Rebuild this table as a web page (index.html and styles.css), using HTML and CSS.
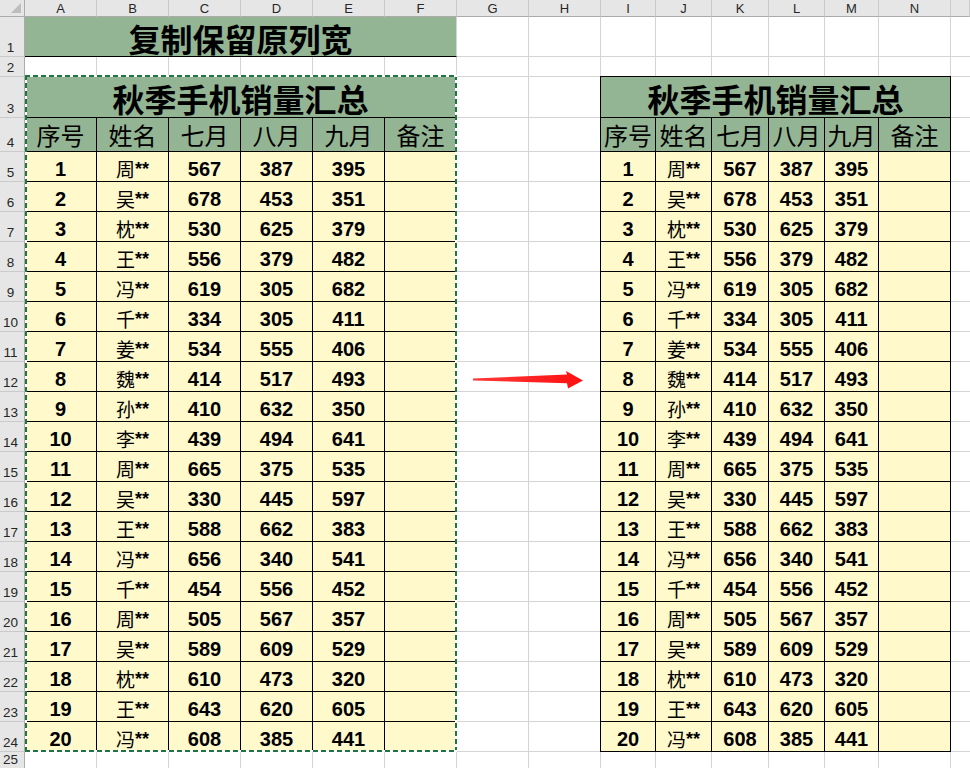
FILE: index.html
```html
<!DOCTYPE html>
<html lang="zh">
<head>
<meta charset="utf-8">
<title>复制保留原列宽</title>
<link rel="stylesheet" href="styles.css">
</head>
<body>
<div class="sheet">
  <div class="colhdr">
    <div class="corner"></div>
    <div>A</div><div>B</div><div>C</div><div>D</div><div>E</div><div>F</div><div>G</div><div>H</div>
    <div>I</div><div>J</div><div>K</div><div>L</div><div>M</div><div>N</div><div></div>
  </div>
  <div class="body">
    <div class="rowhdr">
      <div>1</div><div>2</div><div>3</div><div>4</div><div>5</div><div>6</div><div>7</div><div>8</div><div>9</div><div>10</div>
      <div>11</div><div>12</div><div>13</div><div>14</div><div>15</div><div>16</div><div>17</div><div>18</div><div>19</div><div>20</div>
      <div>21</div><div>22</div><div>23</div><div>24</div><div>25</div>
    </div>
    <div class="cells">
      <div class="title1">复制保留原列宽</div>

      <div class="tbl tbl-left">
        <div class="ttl">秋季手机销量汇总</div>
        <div class="hd">序号</div><div class="hd">姓名</div><div class="hd">七月</div><div class="hd">八月</div><div class="hd">九月</div><div class="hd">备注</div>
        <div>1</div><div class="nm"><span class="sn">周</span><span class="st">**</span></div><div>567</div><div>387</div><div>395</div><div></div>
        <div>2</div><div class="nm"><span class="sn">吴</span><span class="st">**</span></div><div>678</div><div>453</div><div>351</div><div></div>
        <div>3</div><div class="nm"><span class="sn">枕</span><span class="st">**</span></div><div>530</div><div>625</div><div>379</div><div></div>
        <div>4</div><div class="nm"><span class="sn">王</span><span class="st">**</span></div><div>556</div><div>379</div><div>482</div><div></div>
        <div>5</div><div class="nm"><span class="sn">冯</span><span class="st">**</span></div><div>619</div><div>305</div><div>682</div><div></div>
        <div>6</div><div class="nm"><span class="sn">千</span><span class="st">**</span></div><div>334</div><div>305</div><div>411</div><div></div>
        <div>7</div><div class="nm"><span class="sn">姜</span><span class="st">**</span></div><div>534</div><div>555</div><div>406</div><div></div>
        <div>8</div><div class="nm"><span class="sn">魏</span><span class="st">**</span></div><div>414</div><div>517</div><div>493</div><div></div>
        <div>9</div><div class="nm"><span class="sn">孙</span><span class="st">**</span></div><div>410</div><div>632</div><div>350</div><div></div>
        <div>10</div><div class="nm"><span class="sn">李</span><span class="st">**</span></div><div>439</div><div>494</div><div>641</div><div></div>
        <div>11</div><div class="nm"><span class="sn">周</span><span class="st">**</span></div><div>665</div><div>375</div><div>535</div><div></div>
        <div>12</div><div class="nm"><span class="sn">吴</span><span class="st">**</span></div><div>330</div><div>445</div><div>597</div><div></div>
        <div>13</div><div class="nm"><span class="sn">王</span><span class="st">**</span></div><div>588</div><div>662</div><div>383</div><div></div>
        <div>14</div><div class="nm"><span class="sn">冯</span><span class="st">**</span></div><div>656</div><div>340</div><div>541</div><div></div>
        <div>15</div><div class="nm"><span class="sn">千</span><span class="st">**</span></div><div>454</div><div>556</div><div>452</div><div></div>
        <div>16</div><div class="nm"><span class="sn">周</span><span class="st">**</span></div><div>505</div><div>567</div><div>357</div><div></div>
        <div>17</div><div class="nm"><span class="sn">吴</span><span class="st">**</span></div><div>589</div><div>609</div><div>529</div><div></div>
        <div>18</div><div class="nm"><span class="sn">枕</span><span class="st">**</span></div><div>610</div><div>473</div><div>320</div><div></div>
        <div>19</div><div class="nm"><span class="sn">王</span><span class="st">**</span></div><div>643</div><div>620</div><div>605</div><div></div>
        <div>20</div><div class="nm"><span class="sn">冯</span><span class="st">**</span></div><div>608</div><div>385</div><div>441</div><div></div>
      </div>

      <div class="tbl tbl-right">
        <div class="ttl">秋季手机销量汇总</div>
        <div class="hd">序号</div><div class="hd">姓名</div><div class="hd">七月</div><div class="hd">八月</div><div class="hd">九月</div><div class="hd">备注</div>
        <div>1</div><div class="nm"><span class="sn">周</span><span class="st">**</span></div><div>567</div><div>387</div><div>395</div><div></div>
        <div>2</div><div class="nm"><span class="sn">吴</span><span class="st">**</span></div><div>678</div><div>453</div><div>351</div><div></div>
        <div>3</div><div class="nm"><span class="sn">枕</span><span class="st">**</span></div><div>530</div><div>625</div><div>379</div><div></div>
        <div>4</div><div class="nm"><span class="sn">王</span><span class="st">**</span></div><div>556</div><div>379</div><div>482</div><div></div>
        <div>5</div><div class="nm"><span class="sn">冯</span><span class="st">**</span></div><div>619</div><div>305</div><div>682</div><div></div>
        <div>6</div><div class="nm"><span class="sn">千</span><span class="st">**</span></div><div>334</div><div>305</div><div>411</div><div></div>
        <div>7</div><div class="nm"><span class="sn">姜</span><span class="st">**</span></div><div>534</div><div>555</div><div>406</div><div></div>
        <div>8</div><div class="nm"><span class="sn">魏</span><span class="st">**</span></div><div>414</div><div>517</div><div>493</div><div></div>
        <div>9</div><div class="nm"><span class="sn">孙</span><span class="st">**</span></div><div>410</div><div>632</div><div>350</div><div></div>
        <div>10</div><div class="nm"><span class="sn">李</span><span class="st">**</span></div><div>439</div><div>494</div><div>641</div><div></div>
        <div>11</div><div class="nm"><span class="sn">周</span><span class="st">**</span></div><div>665</div><div>375</div><div>535</div><div></div>
        <div>12</div><div class="nm"><span class="sn">吴</span><span class="st">**</span></div><div>330</div><div>445</div><div>597</div><div></div>
        <div>13</div><div class="nm"><span class="sn">王</span><span class="st">**</span></div><div>588</div><div>662</div><div>383</div><div></div>
        <div>14</div><div class="nm"><span class="sn">冯</span><span class="st">**</span></div><div>656</div><div>340</div><div>541</div><div></div>
        <div>15</div><div class="nm"><span class="sn">千</span><span class="st">**</span></div><div>454</div><div>556</div><div>452</div><div></div>
        <div>16</div><div class="nm"><span class="sn">周</span><span class="st">**</span></div><div>505</div><div>567</div><div>357</div><div></div>
        <div>17</div><div class="nm"><span class="sn">吴</span><span class="st">**</span></div><div>589</div><div>609</div><div>529</div><div></div>
        <div>18</div><div class="nm"><span class="sn">枕</span><span class="st">**</span></div><div>610</div><div>473</div><div>320</div><div></div>
        <div>19</div><div class="nm"><span class="sn">王</span><span class="st">**</span></div><div>643</div><div>620</div><div>605</div><div></div>
        <div>20</div><div class="nm"><span class="sn">冯</span><span class="st">**</span></div><div>608</div><div>385</div><div>441</div><div></div>
      </div>
    </div>
  </div>

  <div class="marquee"></div>

  <svg class="arrow" width="116" height="24" viewBox="0 0 116 24">
    <defs>
      <linearGradient id="ag" x1="0" y1="0" x2="1" y2="0">
        <stop offset="0" stop-color="#ff3a3a"/>
        <stop offset="1" stop-color="#ff1010"/>
      </linearGradient>
    </defs>
    <polygon points="3,10.6 97,6.6 96,3 113,12.5 98,20.5 97,15.2 3,12.4" fill="url(#ag)"/>
  </svg>
</div>
</body>
</html>
```

FILE: styles.css
```css
* {
  box-sizing: border-box;
  margin: 0;
  padding: 0;
}

body {
  margin: 0;
  width: 970px;
  height: 768px;
  overflow: hidden;
  background: #ffffff;
  font-family: "Liberation Sans", "Noto Sans CJK SC", sans-serif;
  color: #000;
}

.sheet {
  position: relative;
  width: 970px;
  height: 768px;
  display: flex;
  flex-direction: column;
}

/* column header bar */
.colhdr {
  display: grid;
  grid-template-columns: 25px repeat(8, 72px) 55px 56px 57px 56px 54px 72px 1fr;
  height: 17px;
  flex: none;
}

.colhdr > div {
  background: #e6e6e6;
  border-right: 1px solid #cacaca;
  border-bottom: 1px solid #ababab;
  font-size: 13px;
  line-height: 15px;
  padding-top: 1px;
  text-align: center;
  color: #262626;
}

.colhdr > .corner {
  position: relative;
  border-right-color: #ababab;
}

.corner::after {
  content: "";
  position: absolute;
  left: 11px;
  top: 3px;
  width: 10px;
  height: 10px;
  background: #bdbdbd;
  clip-path: polygon(100% 0, 100% 100%, 0 100%);
}

/* body */
.body {
  display: flex;
  flex: 1;
}

.rowhdr {
  width: 25px;
  flex: none;
  display: grid;
  grid-template-rows: 40px 20px 41px 34px repeat(20, 30px) 1fr;
}

.rowhdr > div {
  background: #e6e6e6;
  border-right: 1px solid #ababab;
  border-bottom: 1px solid #cacaca;
  font-size: 13.5px;
  line-height: 15px;
  color: #262626;
  display: flex;
  align-items: flex-end;
  justify-content: center;
  padding-right: 3px;
  padding-bottom: 1px;
}

.cells {
  flex: 1;
  display: grid;
  grid-template-columns: repeat(8, 72px) 55px 56px 57px 56px 54px 72px 1fr;
  grid-template-rows: 40px 20px 41px 34px repeat(20, 30px) 1fr;
  background:
    repeating-linear-gradient(to right, transparent 0 71px, #d4d4d4 71px 72px) 0 0 / 576px 100% no-repeat,
    linear-gradient(#d4d4d4, #d4d4d4) 630px 0 / 1px 100% no-repeat,
    linear-gradient(#d4d4d4, #d4d4d4) 686px 0 / 1px 100% no-repeat,
    linear-gradient(#d4d4d4, #d4d4d4) 743px 0 / 1px 100% no-repeat,
    linear-gradient(#d4d4d4, #d4d4d4) 799px 0 / 1px 100% no-repeat,
    linear-gradient(#d4d4d4, #d4d4d4) 853px 0 / 1px 100% no-repeat,
    linear-gradient(#d4d4d4, #d4d4d4) 925px 0 / 1px 100% no-repeat,
    linear-gradient(#d4d4d4, #d4d4d4) 0 39px / 100% 1px no-repeat,
    linear-gradient(#d4d4d4, #d4d4d4) 0 59px / 100% 1px no-repeat,
    linear-gradient(#d4d4d4, #d4d4d4) 0 100px / 100% 1px no-repeat,
    linear-gradient(#d4d4d4, #d4d4d4) 0 134px / 100% 1px no-repeat,
    repeating-linear-gradient(to bottom, transparent 0 29px, #d4d4d4 29px 30px) 0 135px / 100% 600px no-repeat,
    #ffffff;
}

.title1 {
  grid-column: 1 / 7;
  grid-row: 1;
  background: #94b594;
  border-bottom: 1px solid #000;
  border-right: 1px solid #cfd6cf;
  display: flex;
  align-items: center;
  justify-content: center;
  font-family: "Noto Sans CJK SC", sans-serif;
  font-weight: 700;
  font-size: 32px;
  line-height: 1;
  padding-top: 3px;
}

/* tables */
.tbl {
  display: grid;
  grid-template-rows: 41px 34px repeat(20, 30px);
}

.tbl-left {
  grid-column: 1 / 7;
  grid-row: 3 / 25;
  grid-template-columns: repeat(6, 72px);
}

.tbl-right {
  grid-column: 9 / 15;
  grid-row: 3 / 25;
  margin-left: -1px;
  margin-top: -1px;
  border-left: 1px solid #000;
  border-top: 1px solid #000;
  grid-template-columns: 55px 56px 57px 56px 54px 72px;
}

.tbl > div {
  background: #fff9cc;
  border-right: 1px solid #000;
  border-bottom: 1px solid #000;
  display: flex;
  align-items: center;
  justify-content: center;
  font-weight: 700;
  font-size: 20px;
  line-height: 1;
  padding-top: 4px;
  white-space: nowrap;
}

.tbl > .ttl {
  grid-column: 1 / -1;
  background: #94b594;
  font-family: "Noto Sans CJK SC", sans-serif;
  font-weight: 700;
  font-size: 32px;
  padding-top: 2px;
}

.tbl > .hd {
  background: #94b594;
  font-family: "Noto Sans CJK SC", sans-serif;
  font-weight: 400;
  font-size: 24px;
  padding-top: 0;
}

.sn {
  font-family: "Noto Sans CJK SC", sans-serif;
  font-weight: 400;
  font-size: 19px;
}

.st {
  font-size: 18px;
  line-height: 0;
  vertical-align: -4px;
}

/* copy marquee around the source range */
.marquee {
  position: absolute;
  left: 25px;
  top: 75px;
  width: 432px;
  height: 677px;
  pointer-events: none;
  background:
    repeating-linear-gradient(to right, #217346 0 5px, #ffffff 5px 8px) left top / 100% 2px no-repeat,
    repeating-linear-gradient(to right, #217346 0 5px, #ffffff 5px 8px) left bottom / 100% 2px no-repeat,
    repeating-linear-gradient(to bottom, #217346 0 5px, #ffffff 5px 8px) left top / 2px 100% no-repeat,
    repeating-linear-gradient(to bottom, #217346 0 5px, #ffffff 5px 8px) right top / 2px 100% no-repeat;
}

.arrow {
  position: absolute;
  left: 470px;
  top: 368px;
}
```
